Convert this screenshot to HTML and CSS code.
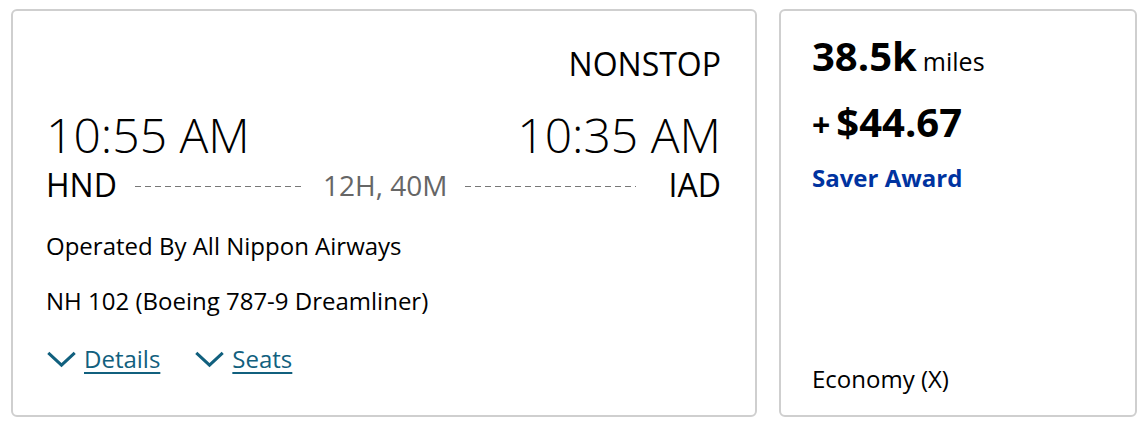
FILE: index.html
```html
<!DOCTYPE html>
<html lang="en">
<head>
<meta charset="utf-8">
<title>Flight result</title>
<link rel="stylesheet" href="styles.css">
</head>
<body>
<div class="row">
  <section class="card flight">
    <div class="stops">NONSTOP</div>
    <div class="times">
      <span>10:55 AM</span>
      <span>10:35 AM</span>
    </div>
    <div class="route">
      <span class="code">HND</span>
      <span class="dash"></span>
      <span class="duration">12H, 40M</span>
      <span class="dash dash-end"></span>
      <span class="code">IAD</span>
    </div>
    <div class="info operated">Operated By All Nippon Airways</div>
    <div class="info equip">NH 102 (Boeing 787-9 Dreamliner)</div>
    <div class="links">
      <a class="toggle" href="#"><svg class="chev" viewBox="0 0 32 18" width="31" height="17"><path d="M2 2 L16 15 L30 2" fill="none" stroke="currentColor" stroke-width="3.2"/></svg><span class="lbl">Details</span></a>
      <a class="toggle" href="#"><svg class="chev" viewBox="0 0 32 18" width="31" height="17"><path d="M2 2 L16 15 L30 2" fill="none" stroke="currentColor" stroke-width="3.2"/></svg><span class="lbl">Seats</span></a>
    </div>
  </section>
  <section class="card fare">
    <div class="miles"><span class="num">38.5k</span><span class="unit">miles</span></div>
    <div class="cash"><span class="plus">+</span><span class="amt">$44.67</span></div>
    <div class="award">Saver Award</div>
    <div class="cabin">Economy (X)</div>
  </section>
</div>
</body>
</html>
```
FILE: styles.css
```css
* { box-sizing: border-box; }
html, body { margin: 0; padding: 0; background: #fff; }
body { font-family: "Open Sans", "Liberation Sans", sans-serif; color: #000; }
.row { display: flex; gap: 22px; padding: 9px 0 0 11px; }
.card {
  border: 2px solid #cfcfcf;
  border-radius: 6px;
  height: 408px;
  background: #fff;
}
.flight { width: 746px; padding: 33px 34px 0 33px; }
.fare { width: 358px; padding: 21px 20px 21px 31px; display: flex; flex-direction: column; }
.stops { text-align: right; font-size: 32px; line-height: 40px; }
.times { display: flex; justify-content: space-between; font-size: 48px; font-weight: 300; line-height: 60px; margin-top: 21px; }
.route { display: flex; align-items: center; font-size: 32px; line-height: 40px; }
.code { flex: none; }
.dash {
  flex: 1;
  height: 1px;
  margin: 2px 18px 0;
  background: repeating-linear-gradient(90deg, #777 0 6px, transparent 6px 10px);
}
.dash-end { margin-right: 33px; }
.duration { color: #666; font-size: 28px; }
.info { font-size: 24px; line-height: 30px; }
.operated { margin-top: 26px; }
.equip { margin-top: 25px; }
.links { display: flex; gap: 34px; margin-top: 28px; }
.toggle { display: flex; align-items: center; gap: 7px; color: #11607e; text-decoration: none; font-size: 24px; line-height: 30px; }
.chev { flex: none; }
.lbl { text-decoration: underline; text-underline-offset: 4px; text-decoration-thickness: 1.5px; }
.miles { font-size: 40px; line-height: 48px; }
.num { font-weight: 700; }
.unit { font-size: 25px; margin-left: 6px; }
.cash { font-size: 40px; line-height: 50px; margin-top: 12px; }
.plus { font-size: 32px; font-weight: 700; }
.amt { font-weight: 700; margin-left: 6px; }
.award { color: #0033a0; font-weight: 700; font-size: 24px; line-height: 30px; margin-top: 13px; }
.cabin { margin-top: auto; font-size: 24px; line-height: 30px; }
```
